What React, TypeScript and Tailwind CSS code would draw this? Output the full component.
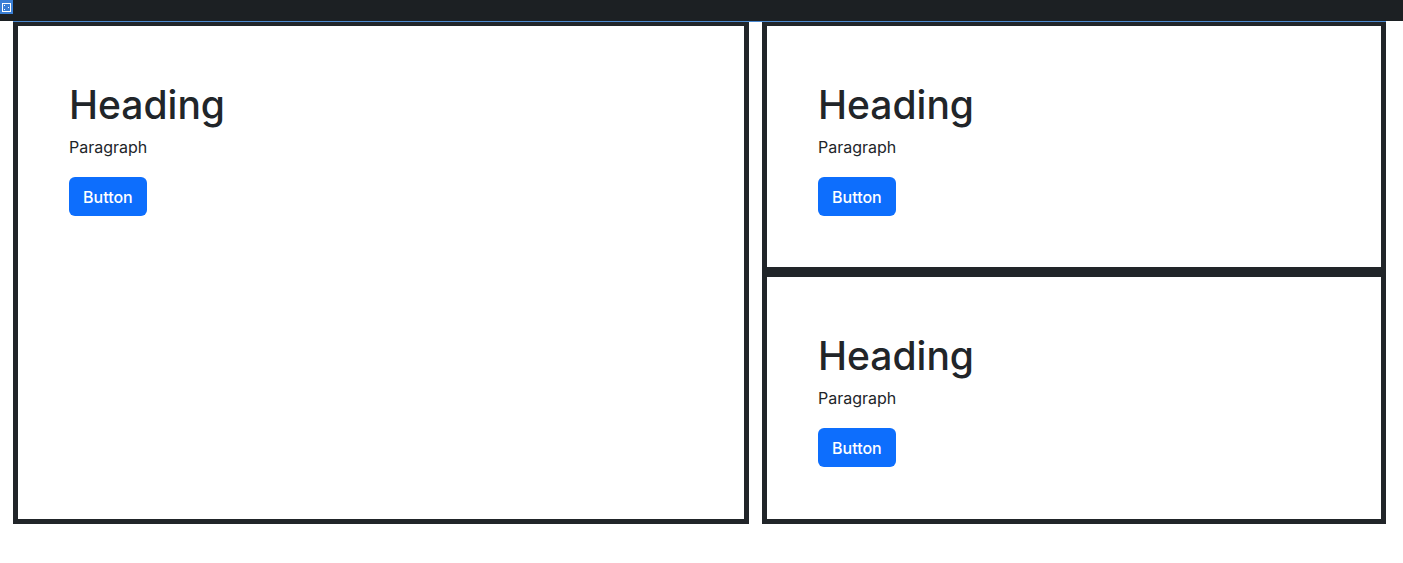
import React from "react"

function Block({ className }: { className: string }) {
  return (
    <div className={`bg-white border-[#212529] ${className}`}>
      <div className="pl-[51px] pt-[55px]">
        <h1 className="text-[39px] leading-[48px] font-medium text-[#212529] mb-[6px]">Heading</h1>
        <p className="text-base leading-6 text-[#212529] mb-[18px]">Paragraph</p>
        <button className="bg-[#0d6efd] text-white text-base leading-6 font-medium px-[14px] h-[39px] rounded-md">
          Button
        </button>
      </div>
    </div>
  )
}

export default function App() {
  return (
    <div className="w-[1403px] h-[563px] bg-white font-['Inter',sans-serif] relative">
      {/* toolbar */}
      <div className="h-[21px] bg-[#1c2023] flex">
        <div className="w-[13px] h-[14px] bg-[#3a7fd5] flex items-center justify-center">
          <svg width="11" height="11" viewBox="0 0 11 11">
            <rect x="1.5" y="1.5" width="8" height="8" fill="none" stroke="white" strokeWidth="1" />
            <rect x="3" y="3" width="1" height="1" fill="white" />
            <rect x="7" y="5" width="1" height="1" fill="white" />
            <rect x="3" y="7" width="1" height="1" fill="white" />
          </svg>
        </div>
      </div>
      <div className="mx-[13px] w-[1373px] h-px bg-[#4a88d0]" />

      <div className="flex gap-[13px] px-[13px]">
        <Block className="w-[736px] h-[502px] border-x-[5px] border-t-4 border-b-[5px]" />
        <div className="w-[624px] flex flex-col">
          <Block className="h-[250px] border-x-[5px] border-t-4 border-b-[5px]" />
          <Block className="h-[252px] border-[5px]" />
        </div>
      </div>
    </div>
  )
}
